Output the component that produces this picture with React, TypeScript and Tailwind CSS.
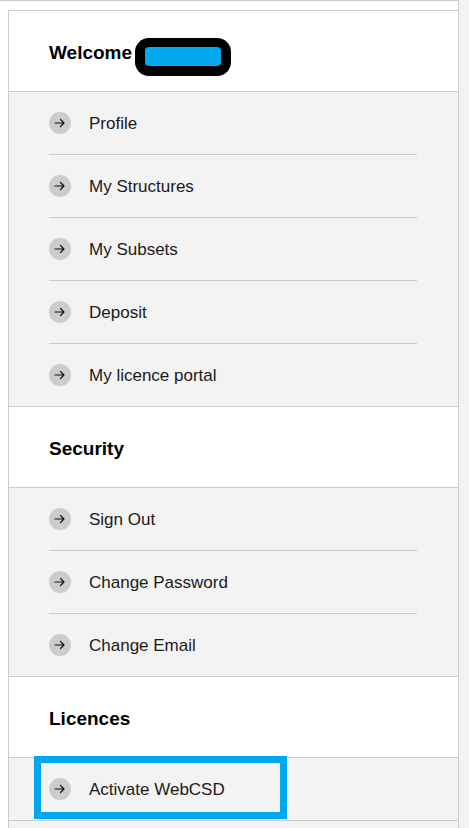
import React from "react";

type Section = {
  title: string;
  items: string[];
  highlight?: string;
};

const sections: Section[] = [
  {
    title: "Welcome",
    items: ["Profile", "My Structures", "My Subsets", "Deposit", "My licence portal"],
  },
  {
    title: "Security",
    items: ["Sign Out", "Change Password", "Change Email"],
  },
  {
    title: "Licences",
    items: ["Activate WebCSD"],
    highlight: "Activate WebCSD",
  },
];

const ArrowBadge = () => (
  <span className="flex h-[22px] w-[22px] shrink-0 items-center justify-center rounded-full bg-[#cccccc]">
    <svg width="12" height="10" viewBox="0 0 12 10" fill="none">
      <path d="M1 5h9M6.5 1.5L10 5 6.5 8.5" stroke="#111" strokeWidth="1.2" strokeLinecap="round" strokeLinejoin="round" />
    </svg>
  </span>
);

const NameRedaction = () => (
  // the user name is blacked out in the screenshot
  <span className="mt-[6px] ml-[3px] inline-flex h-[38px] w-[96px] items-center justify-center rounded-[14px] bg-black">
    <span className="h-[19px] w-[76px] rounded-[4px] bg-[#00a8f0]" />
  </span>
);

const MenuRow = ({ label, last, highlight }: { label: string; last: boolean; highlight: boolean }) => (
  <li className="relative">
    <div className={`flex items-center gap-[18px] ${last ? "h-[62px]" : "h-[63px] border-b border-[#cccccc]"}`}>
      <ArrowBadge />
      <span className="pt-[1px] text-[17px] text-[#1a1a1a]">{label}</span>
    </div>
    {highlight && (
      <div className="pointer-events-none absolute top-[-2px] left-[-15px] h-[63px] w-[253px] border-[7px] border-[#00a8f0]" />
    )}
  </li>
);

export default function App() {
  return (
    <div className="flex min-h-[828px] bg-white" style={{ fontFamily: '"Liberation Sans", Arial, sans-serif' }}>
      <div className="w-[459px] shrink-0 border-r border-[#cccccc]">
        <div className="h-[10px] border-t border-[#cccccc]" />
        <nav className="ml-[8px] border-t border-l border-[#cccccc]">
          {sections.map((section) => (
            <section key={section.title}>
              <div className="flex h-[81px] items-center border-b border-[#cccccc] bg-white pt-[5px] pl-[40px]">
                <h2 className="text-[19px] font-bold text-black">{section.title}</h2>
                {section.title === "Welcome" && <NameRedaction />}
              </div>
              <ul className="border-b border-[#cccccc] bg-[#f3f3f3] pr-[41px] pl-[40px]">
                {section.items.map((item, i) => (
                  <MenuRow
                    key={item}
                    label={item}
                    last={i === section.items.length - 1}
                    highlight={item === section.highlight}
                  />
                ))}
              </ul>
            </section>
          ))}
          <div className="h-[10px] bg-[#f3f3f3]" />
        </nav>
      </div>
      <div className="flex-1 bg-[#f3f3f3]" />
    </div>
  );
}
